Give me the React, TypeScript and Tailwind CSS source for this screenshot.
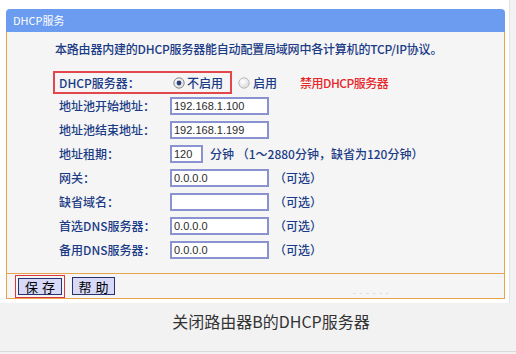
import React from "react";

const navy = "text-[#1b3b86]";
const cjk = { fontFamily: '"Noto Sans CJK SC", "Noto Sans", sans-serif' };
const ipFont = { fontFamily: '"Liberation Sans", Arial, sans-serif' };

function Radio({ checked }: { checked: boolean }) {
  return (
    <svg width="12" height="12" viewBox="0 0 12 12" className="shrink-0">
      <defs>
        <radialGradient id={checked ? "rg1" : "rg2"} cx="40%" cy="35%" r="70%">
          <stop offset="0%" stopColor="#ffffff" />
          <stop offset="100%" stopColor="#d9d9d9" />
        </radialGradient>
      </defs>
      <circle cx="6" cy="6" r="5.2" fill={`url(#${checked ? "rg1" : "rg2"})`} stroke={checked ? "#8c8c8c" : "#b9b9b9"} strokeWidth="1" />
      {checked && <circle cx="6" cy="6" r="2.4" fill="#2b3f7a" />}
    </svg>
  );
}

function Input({ value, w = "w-[99px]" }: { value: string; w?: string }) {
  return (
    <div className={`${w} h-[18px] border-2 border-[#8a93cf] bg-white flex items-center pl-[2px] text-[11px] text-[#2a2a2a] leading-none`} style={ipFont}>
      {value}
    </div>
  );
}

function Row({ label, children }: { label: string; children: React.ReactNode }) {
  return (
    <div className="h-[24px] flex items-center">
      <div className={`w-[111px] text-[12px] font-medium ${navy}`}>{label}</div>
      {children}
    </div>
  );
}

const Opt = () => <span className={`ml-[5px] text-[12px] font-medium ${navy}`}>（可选）</span>;

export default function App() {
  return (
    <div className="w-[516px] h-[354px] bg-[#f2f2f2] overflow-hidden" style={cjk}>
      <div className="w-[510px] h-[303px] bg-white border-r border-[#e3e3e3] pt-[9px] pl-[6px]">
        <div className="w-[499px]">
          <div className="h-[23px] bg-[#6b9cef] rounded-t-[4px] flex items-center pl-[7px] text-white text-[11px]">
            DHCP服务
          </div>
          <div className="h-[241px] bg-[#f5f5f5] border-x border-[#e6a44c]">
            <div className={`h-[39px] pt-[8px] pl-[48px] text-[12px] tracking-[-0.2px] leading-[18px] font-medium ${navy}`}>
              本路由器内建的DHCP服务器能自动配置局域网中各计算机的TCP/IP协议。
            </div>
            <div className="flex items-center h-[23px]">
              <div className="ml-[46px] w-[179px] h-[23px] border-2 border-[#e1474b] flex items-center">
                <span className={`ml-[4px] w-[114px] text-[12px] font-medium ${navy}`}>DHCP服务器：</span>
                <Radio checked />
                <span className={`ml-[2px] text-[12px] font-medium ${navy}`}>不启用</span>
              </div>
              <div className="ml-[6px] flex items-center">
                <Radio checked={false} />
                <span className={`ml-[3px] text-[12px] font-medium ${navy}`}>启用</span>
              </div>
              <span className="ml-[23px] text-[12px] tracking-[-0.5px] font-medium text-[#e8272b]">禁用DHCP服务器</span>
            </div>
            <div className="pl-[52px]">
              <Row label="地址池开始地址：">
                <Input value="192.168.1.100" />
              </Row>
              <Row label="地址池结束地址：">
                <Input value="192.168.1.199" />
              </Row>
              <Row label="地址租期：">
                <Input value="120" w="w-[33px]" />
                <span className={`ml-[7px] text-[12px] font-medium ${navy}`}>分钟 （1～2880分钟，缺省为120分钟）</span>
              </Row>
              <Row label="网关：">
                <Input value="0.0.0.0" />
                <Opt />
              </Row>
              <Row label="缺省域名：">
                <Input value="" />
                <Opt />
              </Row>
              <Row label="首选DNS服务器：">
                <Input value="0.0.0.0" />
                <Opt />
              </Row>
              <Row label="备用DNS服务器：">
                <Input value="0.0.0.0" />
                <Opt />
              </Row>
            </div>
          </div>
          <div className="h-[26px] bg-[#f5f5f5] border border-[#e6a44c] flex items-center">
            <div className="ml-[8px] border border-[#d9383c] p-[2px]">
              <div className="w-[44px] h-[17px] bg-[#d7d9f7] border border-[#27336e] flex items-center justify-center text-[13px] leading-none text-black tracking-[4px] pl-[4px]">
                保存
              </div>
            </div>
            <div className="ml-[7px] w-[43px] h-[18px] bg-[#d7d9f7] border border-[#27336e] flex items-center justify-center text-[13px] leading-none text-black tracking-[4px] pl-[4px]">
              帮助
            </div>
            <span className="ml-[238px] mt-[14px] text-[8px] text-[#c8c8c8] tracking-[1px]">- - - - - -</span>
          </div>
        </div>
      </div>
      <div className="h-[49px] border-b border-[#dadada] pt-[7px] pl-[26px] text-center text-[16px] leading-[22px] text-[#333333]">
        关闭路由器B的DHCP服务器
      </div>
    </div>
  );
}
